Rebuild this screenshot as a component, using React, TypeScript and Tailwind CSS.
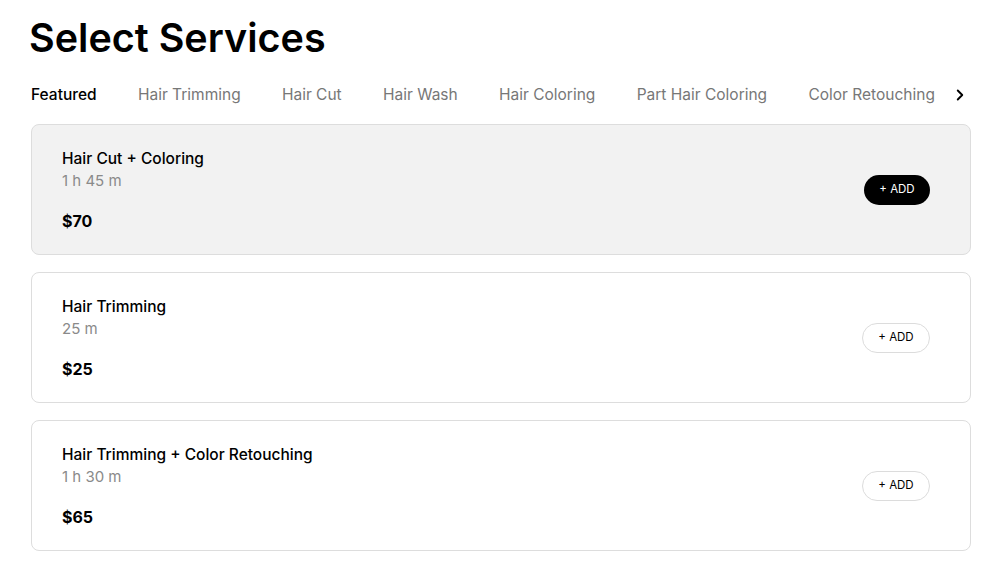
import { ChevronRight } from "lucide-react"

type Service = {
  id: number
  name: string
  duration: string
  price: string
  selected?: boolean
}

const tabs = [
  "Featured",
  "Hair Trimming",
  "Hair Cut",
  "Hair Wash",
  "Hair Coloring",
  "Part Hair Coloring",
  "Color Retouching",
]

const services: Service[] = [
  { id: 1, name: "Hair Cut + Coloring", duration: "1 h 45 m", price: "$70", selected: true },
  { id: 2, name: "Hair Trimming", duration: "25 m", price: "$25" },
  { id: 3, name: "Hair Trimming + Color Retouching", duration: "1 h 30 m", price: "$65" },
]

export default function App() {
  return (
    <div
      className="min-h-screen bg-white pl-[29px] pr-[29px] pt-[14px] text-black"
      style={{ fontFamily: "Inter, 'Noto Sans', sans-serif" }}
    >
      <h1 className="text-[39.5px] font-semibold leading-[48px]">Select Services</h1>

      <div className="mt-[21px] flex items-center pl-[2px]">
        <div className="flex w-[904px] justify-between">
          {tabs.map((tab, index) => (
            <span
              key={tab}
              className={
                index === 0
                  ? "text-[15.5px] font-medium leading-6 text-black"
                  : "text-[15.5px] leading-6 text-[#777777]"
              }
            >
              {tab}
            </span>
          ))}
        </div>
        <ChevronRight className="ml-[16px] h-[18px] w-[18px] text-black" strokeWidth={2.5} />
      </div>

      <div className="mt-[17px] flex w-[942px] flex-col gap-[17px] pl-[2px]">
        {services.map((service) => (
          <div
            key={service.id}
            className={
              service.selected
                ? "flex items-center justify-between rounded-lg border border-[#dddddd] bg-[#f2f2f2] pl-[30px] pr-[40px] pt-[22px] pb-[21px]"
                : "flex items-center justify-between rounded-lg border border-[#dddddd] bg-white pl-[30px] pr-[40px] pt-[22px] pb-[21px]"
            }
          >
            <div className="flex flex-col">
              <span className="text-[15.5px] font-medium leading-6">{service.name}</span>
              <span className="text-[15px] leading-5 text-[#8a8a8a]">{service.duration}</span>
              <span className="mt-[18px] text-[16px] font-bold leading-6">{service.price}</span>
            </div>
            <button
              className={
                service.selected
                  ? "h-[30px] w-[66px] rounded-full bg-black text-[11.5px] font-normal text-white"
                  : "h-[30px] w-[68px] rounded-full border border-[#dcdcdc] bg-white text-[11.5px] font-normal text-black"
              }
            >
              + ADD
            </button>
          </div>
        ))}
      </div>
    </div>
  )
}
